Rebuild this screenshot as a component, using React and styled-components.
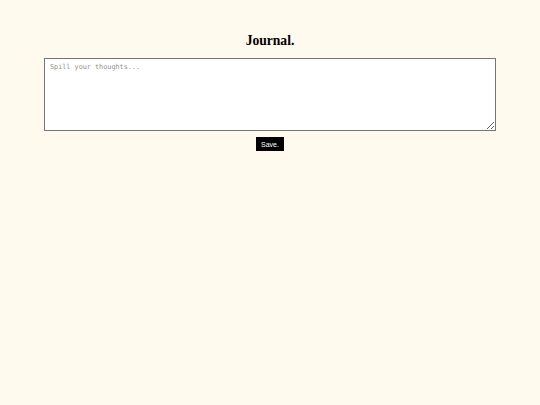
import React, { useState } from 'react';
import styled, { createGlobalStyle } from 'styled-components';

const GlobalStyle = createGlobalStyle`
  html, body {
    margin: 0;
    padding: 0;
    background-color: #fff9ee;
  }
`;

const Page = styled.main`
  min-height: 405px;
  background-color: #fff9ee;
  display: flex;
  flex-direction: column;
  align-items: center;
  padding: 33px 44px 0;
  box-sizing: border-box;
`;

const Title = styled.h1`
  margin: 0 0 9px;
  font-family: "Liberation Serif", "Times New Roman", serif;
  font-weight: 700;
  font-size: 13.6px;
  line-height: 16px;
  color: #000;
`;

const Entry = styled.textarea`
  width: 100%;
  height: 73px;
  box-sizing: border-box;
  padding: 4px 5px;
  border: 1px solid #767676;
  border-radius: 0;
  background: #fff;
  font-family: "DejaVu Sans Mono", "Liberation Mono", monospace;
  font-size: 6.8px;
  line-height: 9px;
  color: #222;
  outline: none;

  &::placeholder {
    color: #8f8f8f;
  }
`;

const SaveButton = styled.button`
  margin-top: 6px;
  height: 14px;
  padding: 0 4px;
  border: 1px solid #000;
  background: #000;
  color: #fff;
  font-family: "Liberation Sans", Arial, sans-serif;
  font-size: 7px;
  cursor: pointer;
`;

export default function App() {
  const [text, setText] = useState('');
  return (
    <>
      <GlobalStyle />
      <Page>
        <Title>Journal.</Title>
        <Entry
          placeholder="Spill your thoughts..."
          value={text}
          onChange={(e) => setText(e.target.value)}
        />
        <SaveButton type="button">Save.</SaveButton>
      </Page>
    </>
  );
}
